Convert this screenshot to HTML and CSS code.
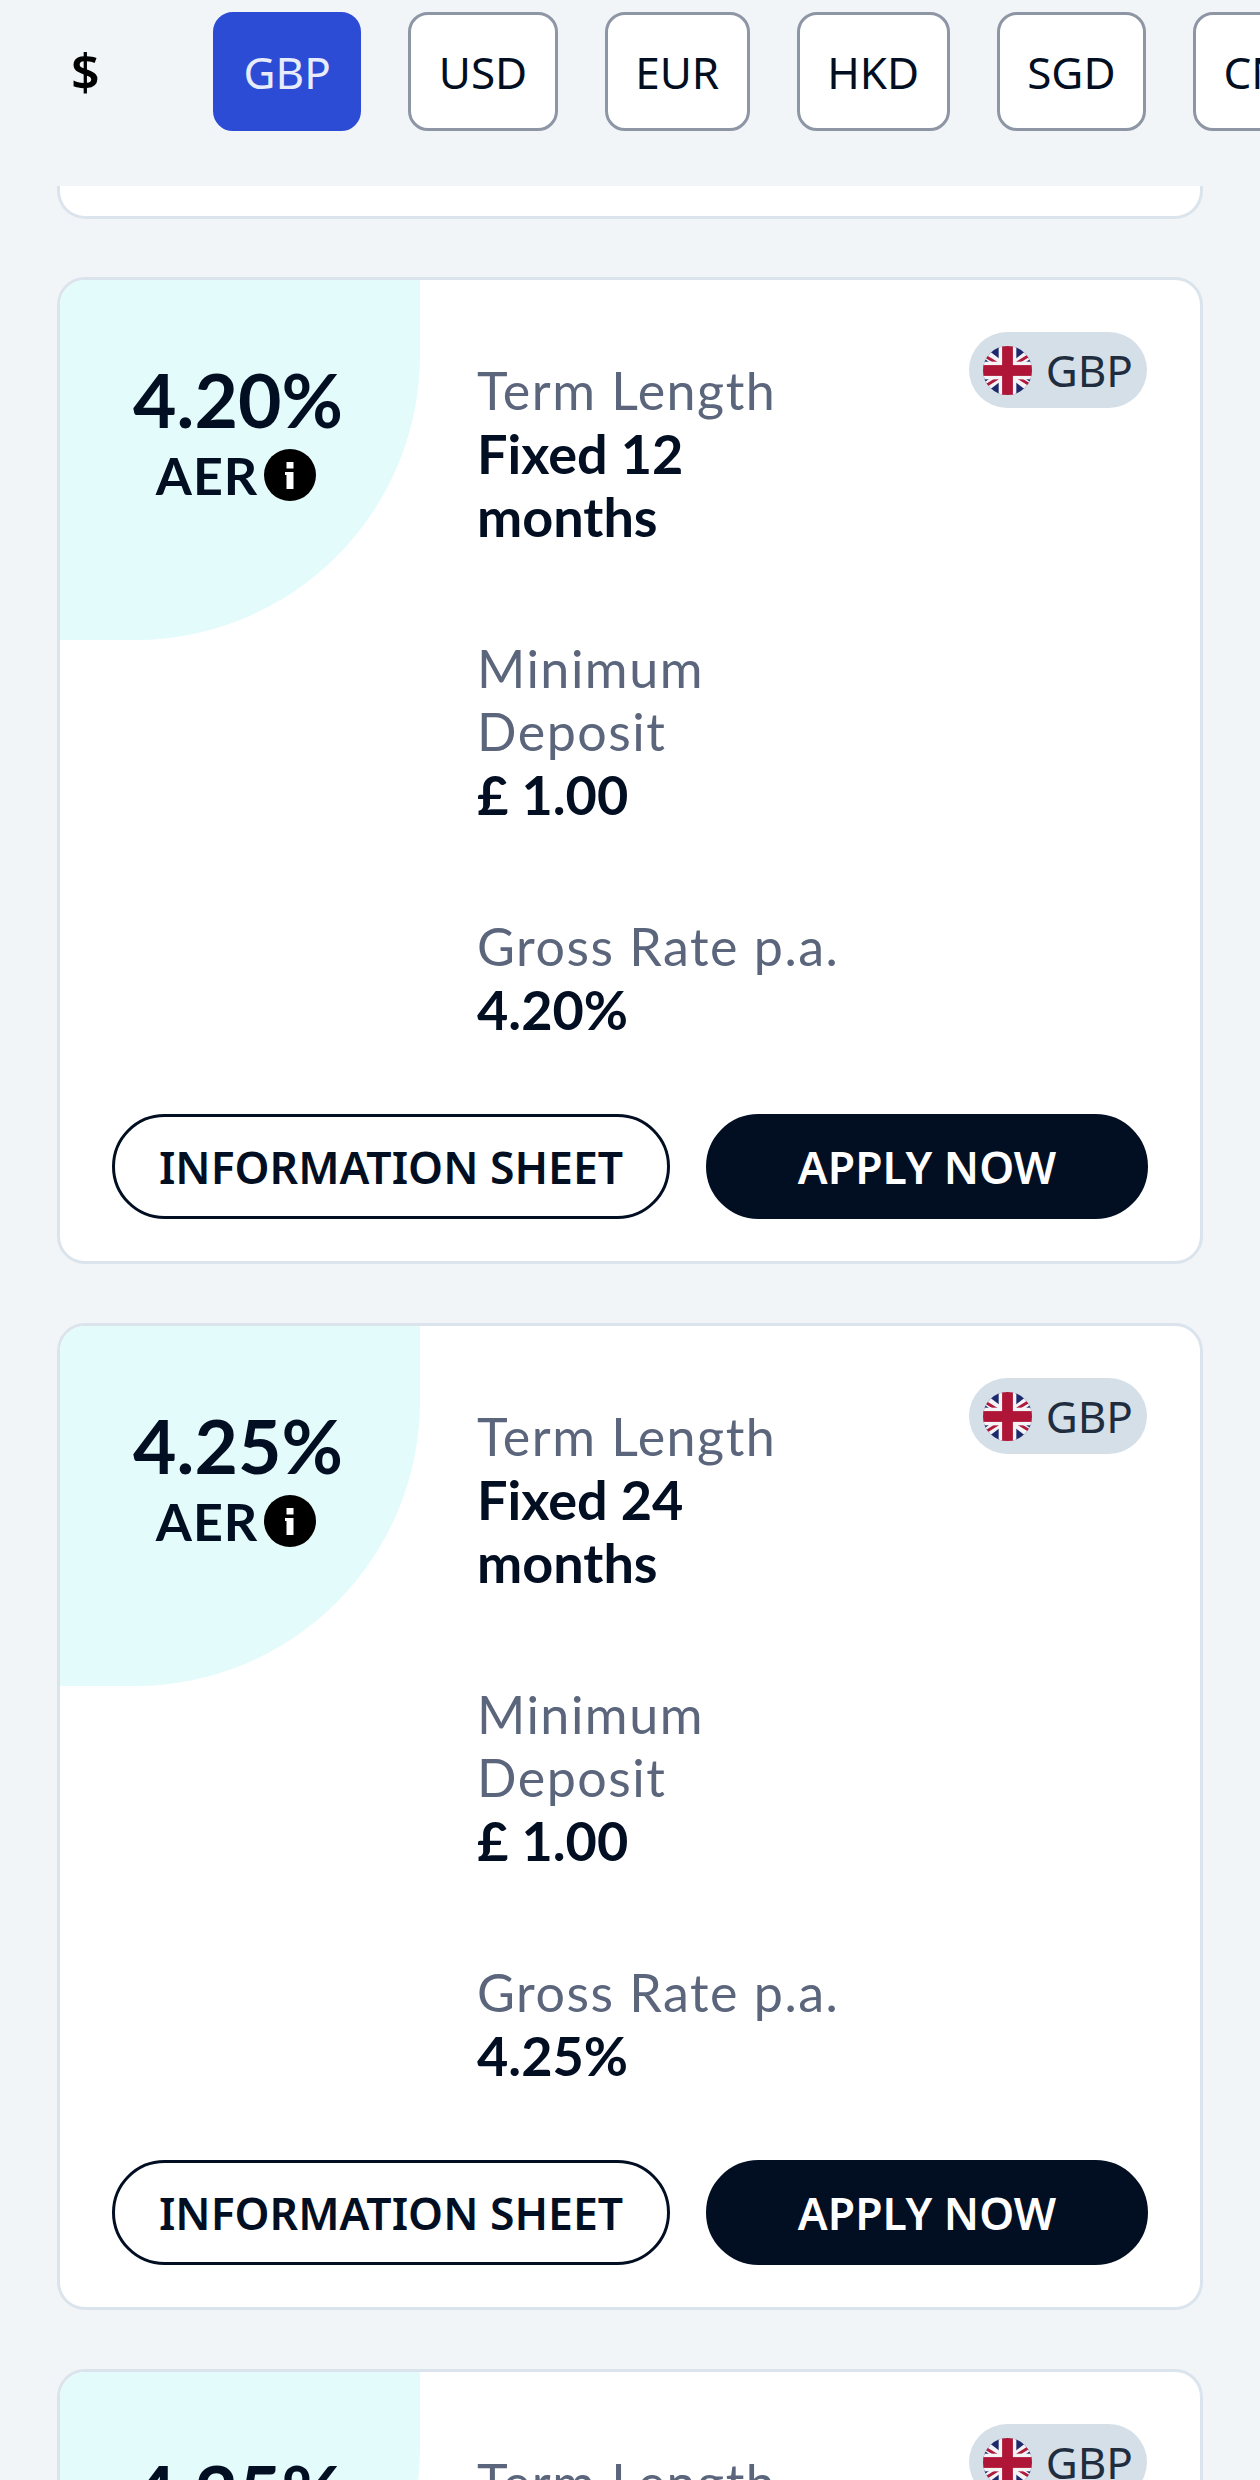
FILE: index.html
```html
<!DOCTYPE html>
<html lang="en">
<head>
    <meta charset="UTF-8">
    <meta name="viewport" content="width=device-width, initial-scale=1.0">
    <title>Savings Accounts</title>
    <link rel="stylesheet" href="styles.css">
</head>
<body>
    <svg class="defs" width="0" height="0" aria-hidden="true">
        <defs>
            <clipPath id="flag-clip"><circle cx="25" cy="25" r="25"/></clipPath>
            <symbol id="flag-gb" viewBox="0 0 50 50">
                <g clip-path="url(#flag-clip)">
                    <rect width="50" height="50" fill="#1c2a6d"/>
                    <path d="M0 6 L50 44 M0 44 L50 6" stroke="#f4f4f6" stroke-width="9"/>
                    <path d="M0 9 L18 20 M50 41 L32 30 M2 41 L18 31 M48 9 L32 19" stroke="#b01a3c" stroke-width="3"/>
                    <rect x="16" width="18" height="50" fill="#f4f4f6"/>
                    <rect y="16" width="50" height="18" fill="#f4f4f6"/>
                    <rect x="19.5" width="11" height="50" fill="#ae1536"/>
                    <rect y="19.5" width="50" height="11" fill="#ae1536"/>
                </g>
            </symbol>
            <symbol id="icon-info" viewBox="0 0 52 52">
                <circle cx="26" cy="26" r="26" fill="#000"/>
                <rect x="22.5" y="13" width="7" height="6.5" fill="#fff"/>
                <path d="M21 23 H29.5 V40 H22.5 V26 H21 Z" fill="#fff"/>
            </symbol>
        </defs>
    </svg>

    <header class="currency-bar">
        <span class="currency-symbol">$</span>
        <div class="currency-list">
            <button class="currency-btn active">GBP</button>
            <button class="currency-btn">USD</button>
            <button class="currency-btn">EUR</button>
            <button class="currency-btn">HKD</button>
            <button class="currency-btn">SGD</button>
            <button class="currency-btn">CNY</button>
        </div>
    </header>

    <main class="card-list">
        <div class="card-stub"></div>

        <section class="card">
            <div class="currency-pill">
                <svg class="flag"><use href="#flag-gb"/></svg>
                <span>GBP</span>
            </div>
            <div class="card-body">
                <div class="rate-box">
                    <div class="rate">4.20%</div>
                    <div class="rate-label">AER <svg class="info-icon"><use href="#icon-info"/></svg></div>
                </div>
                <div class="details">
                    <div class="detail">
                        <div class="detail-label">Term Length</div>
                        <div class="detail-value">Fixed 12 months</div>
                    </div>
                    <div class="detail">
                        <div class="detail-label">Minimum Deposit</div>
                        <div class="detail-value">£ 1.00</div>
                    </div>
                    <div class="detail">
                        <div class="detail-label">Gross Rate p.a.</div>
                        <div class="detail-value">4.20%</div>
                    </div>
                </div>
            </div>
            <div class="actions">
                <button class="btn btn-outline">INFORMATION SHEET</button>
                <button class="btn btn-solid">APPLY NOW</button>
            </div>
        </section>

        <section class="card">
            <div class="currency-pill">
                <svg class="flag"><use href="#flag-gb"/></svg>
                <span>GBP</span>
            </div>
            <div class="card-body">
                <div class="rate-box">
                    <div class="rate">4.25%</div>
                    <div class="rate-label">AER <svg class="info-icon"><use href="#icon-info"/></svg></div>
                </div>
                <div class="details">
                    <div class="detail">
                        <div class="detail-label">Term Length</div>
                        <div class="detail-value">Fixed 24 months</div>
                    </div>
                    <div class="detail">
                        <div class="detail-label">Minimum Deposit</div>
                        <div class="detail-value">£ 1.00</div>
                    </div>
                    <div class="detail">
                        <div class="detail-label">Gross Rate p.a.</div>
                        <div class="detail-value">4.25%</div>
                    </div>
                </div>
            </div>
            <div class="actions">
                <button class="btn btn-outline">INFORMATION SHEET</button>
                <button class="btn btn-solid">APPLY NOW</button>
            </div>
        </section>

        <section class="card">
            <div class="currency-pill">
                <svg class="flag"><use href="#flag-gb"/></svg>
                <span>GBP</span>
            </div>
            <div class="card-body">
                <div class="rate-box">
                    <div class="rate">4.25%</div>
                    <div class="rate-label">AER <svg class="info-icon"><use href="#icon-info"/></svg></div>
                </div>
                <div class="details">
                    <div class="detail">
                        <div class="detail-label">Term Length</div>
                        <div class="detail-value">Fixed 36 months</div>
                    </div>
                </div>
            </div>
        </section>
    </main>
</body>
</html>
```

FILE: styles.css
```css
html, body {
    margin: 0;
    height: 2480px;
    overflow: hidden;
}
body {
    font-family: "Lato", sans-serif;
    background-color: #f1f5f8;
    color: #020e21;
}
.defs {
    display: block;
    height: 0;
}
.currency-bar {
    display: flex;
    height: 186px;
    padding-top: 12px;
    box-sizing: border-box;
    overflow: hidden;
}
.currency-symbol {
    flex: none;
    width: 213px;
    padding-left: 71px;
    box-sizing: border-box;
    height: 119px;
    line-height: 119px;
    font-family: "Noto Sans", sans-serif;
    font-size: 50px;
    font-weight: 600;
    color: #000;
}
.currency-list {
    display: flex;
    gap: 47px;
}
.currency-btn {
    flex: none;
    height: 119px;
    padding: 0 27.5px;
    border: 3px solid #8e96a5;
    border-radius: 20px;
    background-color: #fff;
    font-family: "Noto Sans", sans-serif;
    font-size: 44px;
    color: #020e21;
}
.currency-btn.active {
    background-color: #2c4cd6;
    border-color: #2c4cd6;
    color: #e8ecfa;
}
.card-list {
    display: flex;
    flex-direction: column;
    gap: 59px;
    padding: 0 57px;
}
.card-stub {
    height: 33px;
    margin-bottom: -1px;
    background-color: #fff;
    border: 3px solid #dbe4ec;
    border-top: none;
    border-radius: 0 0 28px 28px;
    box-sizing: border-box;
}
.card {
    position: relative;
    flex: none;
    height: 987px;
    box-sizing: border-box;
    background-color: #fff;
    border: 3px solid #dbe4ec;
    border-radius: 28px;
    overflow: hidden;
}
.card-body {
    display: flex;
}
.rate-box {
    flex: none;
    width: 360px;
    height: 360px;
    padding: 75px 4px 0 0;
    box-sizing: border-box;
    background-color: #e3fbfa;
    border-bottom-right-radius: 285px;
    text-align: center;
}
.rate {
    font-size: 75px;
    font-weight: 700;
    line-height: 89px;
}
.rate-label {
    display: flex;
    justify-content: center;
    align-items: center;
    gap: 6px;
    padding-right: 4px;
    font-size: 52px;
    font-weight: 700;
    line-height: 62px;
    letter-spacing: 1px;
}
.info-icon {
    width: 52px;
    height: 52px;
}
.details {
    width: 380px;
    margin-left: 57px;
    padding-top: 79px;
    display: flex;
    flex-direction: column;
    gap: 89px;
    line-height: 63px;
}
.detail-label {
    font-size: 52px;
    color: #5b667c;
    letter-spacing: 1.5px;
}
.detail-value {
    font-size: 54px;
    font-weight: 700;
}
.currency-pill {
    position: absolute;
    top: 52px;
    right: 53px;
    display: flex;
    align-items: center;
    gap: 14px;
    height: 76px;
    padding: 0 14px;
    border-radius: 38px;
    background-color: #d5dfe8;
    font-family: "Noto Sans", sans-serif;
    font-size: 44px;
    color: #1f2d3f;
}
.flag {
    width: 49px;
    height: 49px;
}
.actions {
    display: flex;
    gap: 36px;
    margin-top: 73px;
    padding: 0 52px;
}
.btn {
    height: 105px;
    border-radius: 53px;
    border: 3px solid #020e21;
    font-family: "Noto Sans", sans-serif;
    font-size: 44.5px;
    font-weight: 600;
}
.btn-outline {
    width: 558px;
    flex: none;
    background-color: #fff;
    color: #020e21;
}
.btn-solid {
    flex: 1;
    background-color: #020e21;
    color: #fff;
}
```
